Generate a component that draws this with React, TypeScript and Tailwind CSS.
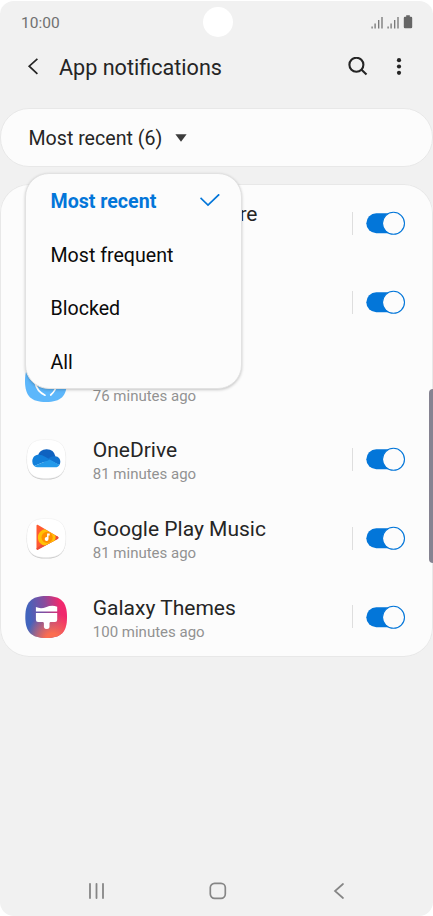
import React, { useState } from 'react';

/* ---------------------------------------------------------------------------
   Icons
--------------------------------------------------------------------------- */

const SignalIcon = () => (
  <svg width="12" height="13" viewBox="0 0 12 13" fill="none" stroke="#747474" strokeWidth="1.3">
    <path d="M1.1 10.5V12.5M4.1 7.5V12.5M7.7 4V12.5M11 1V12.5" />
  </svg>
);

const BatteryIcon = () => (
  <svg width="10" height="14" viewBox="0 0 10 14" fill="#666">
    <path d="M3.2 0.3h3.6v1.4h1.2a1.2 1.2 0 0 1 1.2 1.2v9.2a1.2 1.2 0 0 1-1.2 1.2H2a1.2 1.2 0 0 1-1.2-1.2V2.9A1.2 1.2 0 0 1 2 1.7h1.2z" />
  </svg>
);

const BackIcon = () => (
  <svg width="12" height="18" viewBox="0 0 12 18" fill="none" stroke="#252525" strokeWidth="1.7">
    <path d="M10.4 0.8 2.2 8.2l8.2 7.6" />
  </svg>
);

const SearchIcon = () => (
  <svg width="20" height="20" viewBox="0 0 20 20" fill="none" stroke="#252525" strokeWidth="2.1">
    <circle cx="8.4" cy="7.8" r="7" />
    <path d="M13.3 12.6 18.5 17.6" />
  </svg>
);

const MoreIcon = () => (
  <svg width="6" height="18" viewBox="0 0 6 18" fill="#252525">
    <circle cx="3" cy="2.2" r="2.1" />
    <circle cx="3" cy="8.5" r="2.1" />
    <circle cx="3" cy="14.8" r="2.1" />
  </svg>
);

const CheckIcon = () => (
  <svg width="20" height="14" viewBox="0 0 20 14" fill="none" stroke="#0376d9" strokeWidth="1.7">
    <path d="M0.5 3.9 8 11 19.2 0.3" />
  </svg>
);

/* ---------------------------------------------------------------------------
   App tiles
--------------------------------------------------------------------------- */

const WhiteTile: React.FC<{ children: React.ReactNode }> = ({ children }) => (
  <svg width="42" height="42" viewBox="0 0 42 42" className="overflow-visible">
    <path
      d="M21 2C35 2 40.9 7.4 40.9 21.4S35 41.6 21 41.6 1.7 35.4 1.7 21.4 7 2 21 2Z"
      fill="#c6c6c6"
    />
    <path
      d="M21 1.4C35 1.4 40.9 6.8 40.9 20.8S35 40.6 21 40.6 1.7 34.8 1.7 20.8 7 1.4 21 1.4Z"
      fill="#fff"
      stroke="#ededed"
      strokeWidth="0.5"
    />
    {children}
  </svg>
);

const OneDriveIcon = () => (
  <WhiteTile>
    <g transform="translate(0.3 0.4)">
      <path d="M12.5 17.5a9.1 9.1 0 0 1 17.600.4l-4 6-13-1z" fill="#0f62c0" />
      <path d="M30 17.900c3.300.3 5 2.800 5 5.600 0 1.200-.4 2.200-1 3.100L22.500 21c1.600-2.200 4.200-3.400 7.500-3.100Z" fill="#1274d0" />
      <path d="M12.500 16.400c2.800-.2 5.200.7 7.300 2l4.800 2.800L8.900 27.600a5.800 5.800 0 0 1-1.900-4.500c0-3.700 2.300-6.400 5.500-6.700Z" fill="#127fda" />
      <path d="M8.900 27.600 24.600 21 34.200 26.500c-.9 1.500-2.400 2.300-4.200 2.300H12.400c-1.400 0-2.500-.4-3.500-1.200Z" fill="#249aea" />
    </g>
  </WhiteTile>
);

const PlayMusicIcon = () => (
  <WhiteTile>
    <g transform="translate(0.3 0.3)">
      <path d="M11.2 8.3c0-.9.8-1.200 1.600-.7l19.500 11.500c1.200.8 1.200 1.800 0 2.500L12.8 32.200c-.8.5-1.600.1-1.600-.7z" fill="#ff5a32" />
      <path d="M11.200 30.900 29 18l3.300 1.200c1.200.8 1.200 1.700 0 2.400L12.800 32.200c-.8.5-1.600.1-1.600-.7z" fill="#ea4a38" />
      <path d="M14.200 25.200A8.400 8.400 0 0 1 19.600 11.900l10.600 6.200a8.500 8.500 0 0 1-.6 5.200l-9.800 5a8.400 8.400 0 0 1-5.600-3.100Z" fill="#ffc107" />
      <circle cx="21.8" cy="20.1" r="5.6" fill="#ff8f00" />
      <path d="M21.800 16.300h2.600v1.800h-1.200v3.600a1.900 1.900 0 1 1-1.400-1.800z" fill="#fff" />
    </g>
  </WhiteTile>
);

const ThemesIcon = () => (
  <svg width="42" height="42" viewBox="0 0 42 42">
    <defs>
      <linearGradient id="themesBase" x1="0" y1="0.45" x2="1" y2="0.3">
        <stop offset="0.08" stopColor="#4264bd" />
        <stop offset="0.5" stopColor="#8a4b9c" />
        <stop offset="0.85" stopColor="#f0286d" />
      </linearGradient>
      <radialGradient id="themesWarm" cx="0.65" cy="1.05" r="0.65">
        <stop offset="0.25" stopColor="#fb6d50" />
        <stop offset="1" stopColor="#fb6d50" stopOpacity="0" />
      </radialGradient>
    </defs>
    <g transform="translate(0.3 0)">
      <path d="M21 0C36 0 41.7 6 41.7 21S36 42 21 42 0 36 0 21 6 0 21 0Z" fill="url(#themesBase)" />
      <path d="M21 0C36 0 41.7 6 41.7 21S36 42 21 42 0 36 0 21 6 0 21 0Z" fill="url(#themesWarm)" />
      <path
        d="M10.600 15.600v-4.600c3.300 1.500 6.500 1.500 10 .2 3.800-1.400 7.400-2 11.300-.4v4.800zM10.600 17h21.300v6.800a2.200 2.200 0 0 1-2.200 2.200h-3.900c-.9 0-1.600.5-1.600 1.400v3.800a3 3 0 0 1-5.600 0v-3.800c0-.9-.700-1.400-1.600-1.400h-4.200a2.200 2.200 0 0 1-2.200-2.200z"
        fill="#fff"
      />
    </g>
  </svg>
);

const BlueTileIcon = () => (
  <svg width="42" height="42" viewBox="0 0 42 42" fill="none">
    <path d="M21 0C36 0 42 6 42 21S36 42 21 42 0 36 0 21 6 0 21 0Z" fill="#5db7fb" />
    <path d="M10.3 23c1 5.400 4.700 9.800 9.700 12.200M32 23.500c-.7 4.800-2.500 8.200-6.300 11.500" stroke="#fff" strokeWidth="1.7" strokeLinecap="round" />
  </svg>
);

/* ---------------------------------------------------------------------------
   Data
--------------------------------------------------------------------------- */

type AppRow = {
  id: number;
  name?: string;
  time?: string;
  icon?: React.ReactNode;
  toggle: boolean;
};

// The open menu covers most of the first three rows, so they only carry what shows.
const APPS: AppRow[] = [
  { id: 1, name: 're', toggle: true },
  { id: 2, toggle: true },
  { id: 3, time: '76 minutes ago', icon: <BlueTileIcon />, toggle: false },
  { id: 4, name: 'OneDrive', time: '81 minutes ago', icon: <OneDriveIcon />, toggle: true },
  { id: 5, name: 'Google Play Music', time: '81 minutes ago', icon: <PlayMusicIcon />, toggle: true },
  { id: 6, name: 'Galaxy Themes', time: '100 minutes ago', icon: <ThemesIcon />, toggle: true },
];

const FILTERS = ['Most recent', 'Most frequent', 'Blocked', 'All'];

/* ---------------------------------------------------------------------------
   Rows
--------------------------------------------------------------------------- */

const Toggle = () => {
  const [on, setOn] = useState(true);

  return (
    <button type="button" role="switch" aria-checked={on} onClick={() => setOn(!on)}>
      <svg width="40" height="24" viewBox="0 0 40 24" className={on ? '' : '-scale-x-100 grayscale'}>
        <rect x="0.3" y="2.2" width="34" height="20" rx="10" fill="#0376d9" />
        <circle cx="27.5" cy="12.3" r="11" fill="#fcfcfc" stroke="#0376d9" strokeWidth="1.1" />
      </svg>
    </button>
  );
};

const NotificationRow: React.FC<{ app: AppRow }> = ({ app }) => (
  <li className="flex h-[78.7px] items-center pr-[27px] pl-[25.4px]">
    <div className="h-[42px] w-[42px] shrink-0">{app.icon}</div>
    <div className={`mt-[6px] flex-1 whitespace-nowrap ${app.name === 're' ? 'ml-[172px]' : 'ml-[25.4px]'}`}>
      <p className="h-[25px] text-[21px] leading-[25px] text-[#252525]">{app.name}</p>
      <p className="h-[23px] text-[15px] leading-[23px] text-[#929292]">{app.time}</p>
    </div>
    {app.toggle && (
      <div className="flex items-center gap-[13px]">
        <span className="h-[23px] w-px bg-[#dedede]" />
        <Toggle />
      </div>
    )}
  </li>
);

/* ---------------------------------------------------------------------------
   Main component
--------------------------------------------------------------------------- */

const App: React.FC = () => {
  const [filter, setFilter] = useState('Most recent');

  return (
    <div className="h-[916px] w-[433px] bg-white font-[Roboto,sans-serif]">
      <div className="relative flex h-full flex-col overflow-hidden rounded-[14px] border-t border-white bg-[#f1f1f1]">
        {/* status bar */}
        <div className="flex h-[43px] items-center justify-between pr-[20px] pl-[21px]">
          <span className="pt-[2px] text-[15.5px] text-[#707070]">10:00</span>
          <div className="flex items-center gap-[4px] pb-px">
            <SignalIcon />
            <SignalIcon />
            <BatteryIcon />
          </div>
          <span className="absolute top-[6px] left-[202.5px] h-[30px] w-[30px] rounded-full bg-white" />
        </div>

        {/* title bar */}
        <header className="flex h-[46px] items-center pr-[31px] pl-[27px] text-[#252525]">
          <button type="button" aria-label="Back">
            <BackIcon />
          </button>
          <h1 className="ml-[20px] flex-1 pt-[2px] text-[21.6px]">App notifications</h1>
          <button type="button" aria-label="Search">
            <SearchIcon />
          </button>
          <button type="button" aria-label="More options" className="ml-[28px]">
            <MoreIcon />
          </button>
        </header>

        {/* current filter */}
        <div className="relative mt-[18px]">
          <button
            type="button"
            className="flex h-[59px] w-full items-center rounded-[29px] border border-[#e8e8e8] bg-[#fcfcfc] pt-[3px] pl-[27.5px] text-[19.6px] text-[#252525]"
          >
            Most recent (6)
            <svg width="12" height="8" viewBox="0 0 12 8" className="mb-[3px] ml-[13px]">
              <path d="M0.4 0.2h11.200L6 7.800z" fill="#3c3c3c" />
            </svg>
          </button>

          <ul className="absolute top-[65px] left-[25px] z-10 h-[216px] w-[217px] rounded-[24px] border border-[#e2e2e2] bg-[#fcfcfc] pt-[0.6px] shadow-[0_1px_3px_rgba(0,0,0,0.22)]">
            {FILTERS.map((item) => (
              <li key={item} className="h-[53.8px]">
                <button
                  type="button"
                  onClick={() => setFilter(item)}
                  className={`flex h-full w-full items-center justify-between pr-[21px] pl-[24.5px] text-[19.6px] ${
                    item === filter ? 'font-bold text-[#0376d9]' : 'text-[#0a0a0a]'
                  }`}
                >
                  {item}
                  {item === filter && <CheckIcon />}
                </button>
              </li>
            ))}
          </ul>
        </div>

        {/* app list */}
        <ul className="mt-[17px] h-[473px] rounded-[29px] bg-[#fcfcfc] shadow-[inset_0_0_0_1px_#e8e8e8]">
          {APPS.map((app) => (
            <NotificationRow key={app.id} app={app} />
          ))}
        </ul>

        {/* side key on the frame */}
        <span className="absolute top-[388px] right-0 h-[174px] w-[4px] rounded-l-[4px] bg-[#858391]" />

        {/* navigation bar */}
        <nav className="mt-auto flex h-[50px] items-center justify-between pr-[88px] pl-[88px]">
          <svg width="17" height="18" viewBox="0 0 17 18" stroke="#868686" strokeWidth="1.8" strokeLinecap="round">
            <path d="M2 1.8V16M8.5 1.8V16M15 1.8V16" />
          </svg>
          <svg width="18" height="18" viewBox="0 0 18 18" fill="none" stroke="#868686" strokeWidth="1.7" className="-ml-[3px]">
            <rect x="1.3" y="1.3" width="15" height="15" rx="4.3" />
          </svg>
          <svg width="12" height="18" viewBox="0 0 12 18" fill="none" stroke="#868686" strokeWidth="1.7" strokeLinecap="round">
            <path d="M10 2 2 9l8 7" />
          </svg>
        </nav>
      </div>
    </div>
  );
};

export default App;
